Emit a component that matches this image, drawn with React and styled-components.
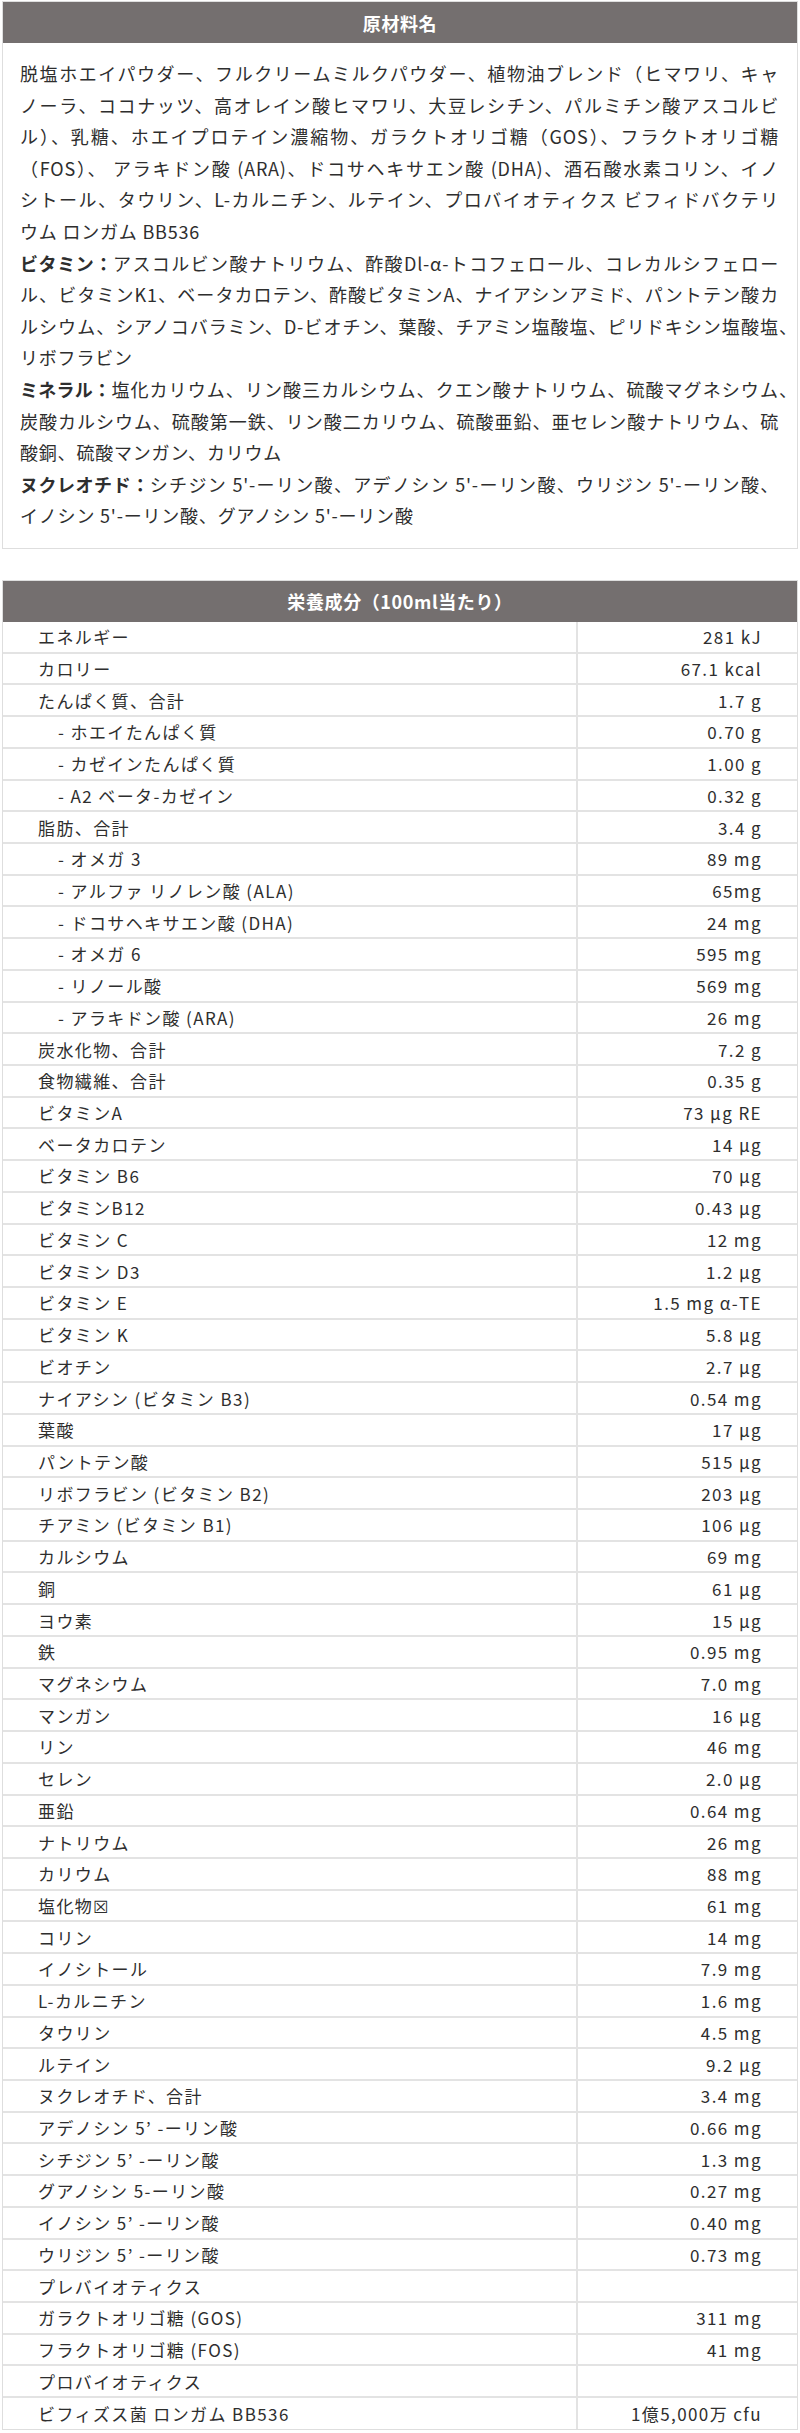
import React from 'react';
import styled, { createGlobalStyle } from 'styled-components';

const GlobalStyle = createGlobalStyle`
  body {
    margin: 0;
    background: #fff;
    color: #2e2e2e;
    font-family: "Noto Sans CJK JP", "Noto Sans", "DejaVu Sans", sans-serif;
  }
`

const Page = styled.div`
  padding: 1px 2px 0;
  display: flex;
  flex-direction: column;
  gap: 31px;
`
const Panel = styled.section`
  border: 1px solid #dedede;
`
const PanelHeader = styled.h2`
  margin: 0;
  height: 41px;
  display: flex;
  align-items: center;
  justify-content: center;
  background: #746f6f;
  color: #fff;
  font-size: 18px;
  font-weight: 700;
  letter-spacing: 0.6px;
`
const Ingredients = styled.div`
  padding: 15px 18px 16px 17px;
  font-size: 18px;
  letter-spacing: 0.8px;
  line-height: 31.6px;
`
// full lines are stretched edge to edge, like the justified block in the picture
const Line = styled.span`
  display: block;
  text-align: left;
  text-align-last: ${p => (p.$fill ? 'justify' : 'auto')};
`
// a comma that hangs past the right edge of the text block
const Hang = styled.span`
  display: inline-block;
  width: 0;
  white-space: nowrap;
  text-align-last: auto;
`
const Term = styled.b`
  font-weight: 700;
  letter-spacing: 0;
`
const Row = styled.div`
  display: grid;
  grid-template-columns: 573px 1fr;
  height: 31.72px;
  box-sizing: border-box;
  border-bottom: 2px solid #e3e3e3;
  font-size: 17px;
  letter-spacing: 1.4px;
  &:last-child {
    border-bottom: none;
    height: 30.72px;
  }
`
const Label = styled.div`
  display: flex;
  align-items: center;
  padding-left: ${p => (p.$sub ? 55 : 35)}px;
  white-space: nowrap;
`
const Value = styled.div`
  display: flex;
  align-items: center;
  justify-content: flex-end;
  padding-right: 35px;
  border-left: 2px solid #e3e3e3;
  white-space: nowrap;
`

const nutrients = [
  ['エネルギー', '281 kJ'],
  ['カロリー', '67.1 kcal'],
  ['たんぱく質、合計', '1.7 g'],
  ['- ホエイたんぱく質', '0.70 g', true],
  ['- カゼインたんぱく質', '1.00 g', true],
  ['- A2 ベータ-カゼイン', '0.32 g', true],
  ['脂肪、合計', '3.4 g'],
  ['- オメガ 3', '89 mg', true],
  ['- アルファ リノレン酸 (ALA)', '65mg', true],
  ['- ドコサヘキサエン酸 (DHA)', '24 mg', true],
  ['- オメガ 6', '595 mg', true],
  ['- リノール酸', '569 mg', true],
  ['- アラキドン酸 (ARA)', '26 mg', true],
  ['炭水化物、合計', '7.2 g'],
  ['食物繊維、合計', '0.35 g'],
  ['ビタミンA', '73 μg RE'],
  ['ベータカロテン', '14 μg'],
  ['ビタミン B6', '70 μg'],
  ['ビタミンB12', '0.43 μg'],
  ['ビタミン C', '12 mg'],
  ['ビタミン D3', '1.2 μg'],
  ['ビタミン E', '1.5 mg α-TE'],
  ['ビタミン K', '5.8 μg'],
  ['ビオチン', '2.7 μg'],
  ['ナイアシン (ビタミン B3)', '0.54 mg'],
  ['葉酸', '17 μg'],
  ['パントテン酸', '515 μg'],
  ['リボフラビン (ビタミン B2)', '203 μg'],
  ['チアミン (ビタミン B1)', '106 μg'],
  ['カルシウム', '69 mg'],
  ['銅', '61 μg'],
  ['ヨウ素', '15 μg'],
  ['鉄', '0.95 mg'],
  ['マグネシウム', '7.0 mg'],
  ['マンガン', '16 μg'],
  ['リン', '46 mg'],
  ['セレン', '2.0 μg'],
  ['亜鉛', '0.64 mg'],
  ['ナトリウム', '26 mg'],
  ['カリウム', '88 mg'],
  ['塩化物☒', '61 mg'],
  ['コリン', '14 mg'],
  ['イノシトール', '7.9 mg'],
  ['L-カルニチン', '1.6 mg'],
  ['タウリン', '4.5 mg'],
  ['ルテイン', '9.2 μg'],
  ['ヌクレオチド、合計', '3.4 mg'],
  ['アデノシン 5’ -ーリン酸', '0.66 mg'],
  ['シチジン 5’ -ーリン酸', '1.3 mg'],
  ['グアノシン 5-ーリン酸', '0.27 mg'],
  ['イノシン 5’ -ーリン酸', '0.40 mg'],
  ['ウリジン 5’ -ーリン酸', '0.73 mg'],
  ['プレバイオティクス', ''],
  ['ガラクトオリゴ糖 (GOS)', '311 mg'],
  ['フラクトオリゴ糖 (FOS)', '41 mg'],
  ['プロバイオティクス', ''],
  ['ビフィズス菌 ロンガム BB536', '1億5,000万 cfu'],
]

const App = () => {
  return (
    <Page>
      <GlobalStyle />
      <Panel>
        <PanelHeader>原材料名</PanelHeader>
        <Ingredients>
          <Line $fill>脱塩ホエイパウダー、フルクリームミルクパウダー、植物油ブレンド（ヒマワリ、キャ</Line>
          <Line $fill>ノーラ、ココナッツ、高オレイン酸ヒマワリ、大豆レシチン、パルミチン酸アスコルビ</Line>
          <Line $fill>ル）、乳糖、ホエイプロテイン濃縮物、ガラクトオリゴ糖（GOS）、フラクトオリゴ糖</Line>
          <Line $fill>（FOS）、 アラキドン酸 (ARA)、ドコサヘキサエン酸 (DHA)、酒石酸水素コリン、イノ</Line>
          <Line $fill>シトール、タウリン、L-カルニチン、ルテイン、プロバイオティクス ビフィドバクテリ</Line>
          <Line>ウム ロンガム BB536</Line>
          <Line $fill><Term>ビタミン：</Term>アスコルビン酸ナトリウム、酢酸Dl-α-トコフェロール、コレカルシフェロー</Line>
          <Line $fill>ル、ビタミンK1、ベータカロテン、酢酸ビタミンA、ナイアシンアミド、パントテン酸カ</Line>
          <Line $fill>ルシウム、シアノコバラミン、D-ビオチン、葉酸、チアミン塩酸塩、ピリドキシン塩酸塩<Hang>、</Hang></Line>
          <Line>リボフラビン</Line>
          <Line $fill><Term>ミネラル：</Term>塩化カリウム、リン酸三カルシウム、クエン酸ナトリウム、硫酸マグネシウム<Hang>、</Hang></Line>
          <Line $fill>炭酸カルシウム、硫酸第一鉄、リン酸二カリウム、硫酸亜鉛、亜セレン酸ナトリウム、硫</Line>
          <Line>酸銅、硫酸マンガン、カリウム</Line>
          <Line $fill><Term>ヌクレオチド：</Term>シチジン 5'-ーリン酸、アデノシン 5'-ーリン酸、ウリジン 5'-ーリン酸、</Line>
          <Line>イノシン 5'-ーリン酸、グアノシン 5'-ーリン酸</Line>
        </Ingredients>
      </Panel>
      <Panel>
        <PanelHeader>栄養成分（100ml当たり）</PanelHeader>
        {nutrients.map(([name, value, sub]) => (
          <Row key={name}>
            <Label $sub={sub}>{name}</Label>
            <Value>{value}</Value>
          </Row>
        ))}
      </Panel>
    </Page>
  );
}

export default App;
